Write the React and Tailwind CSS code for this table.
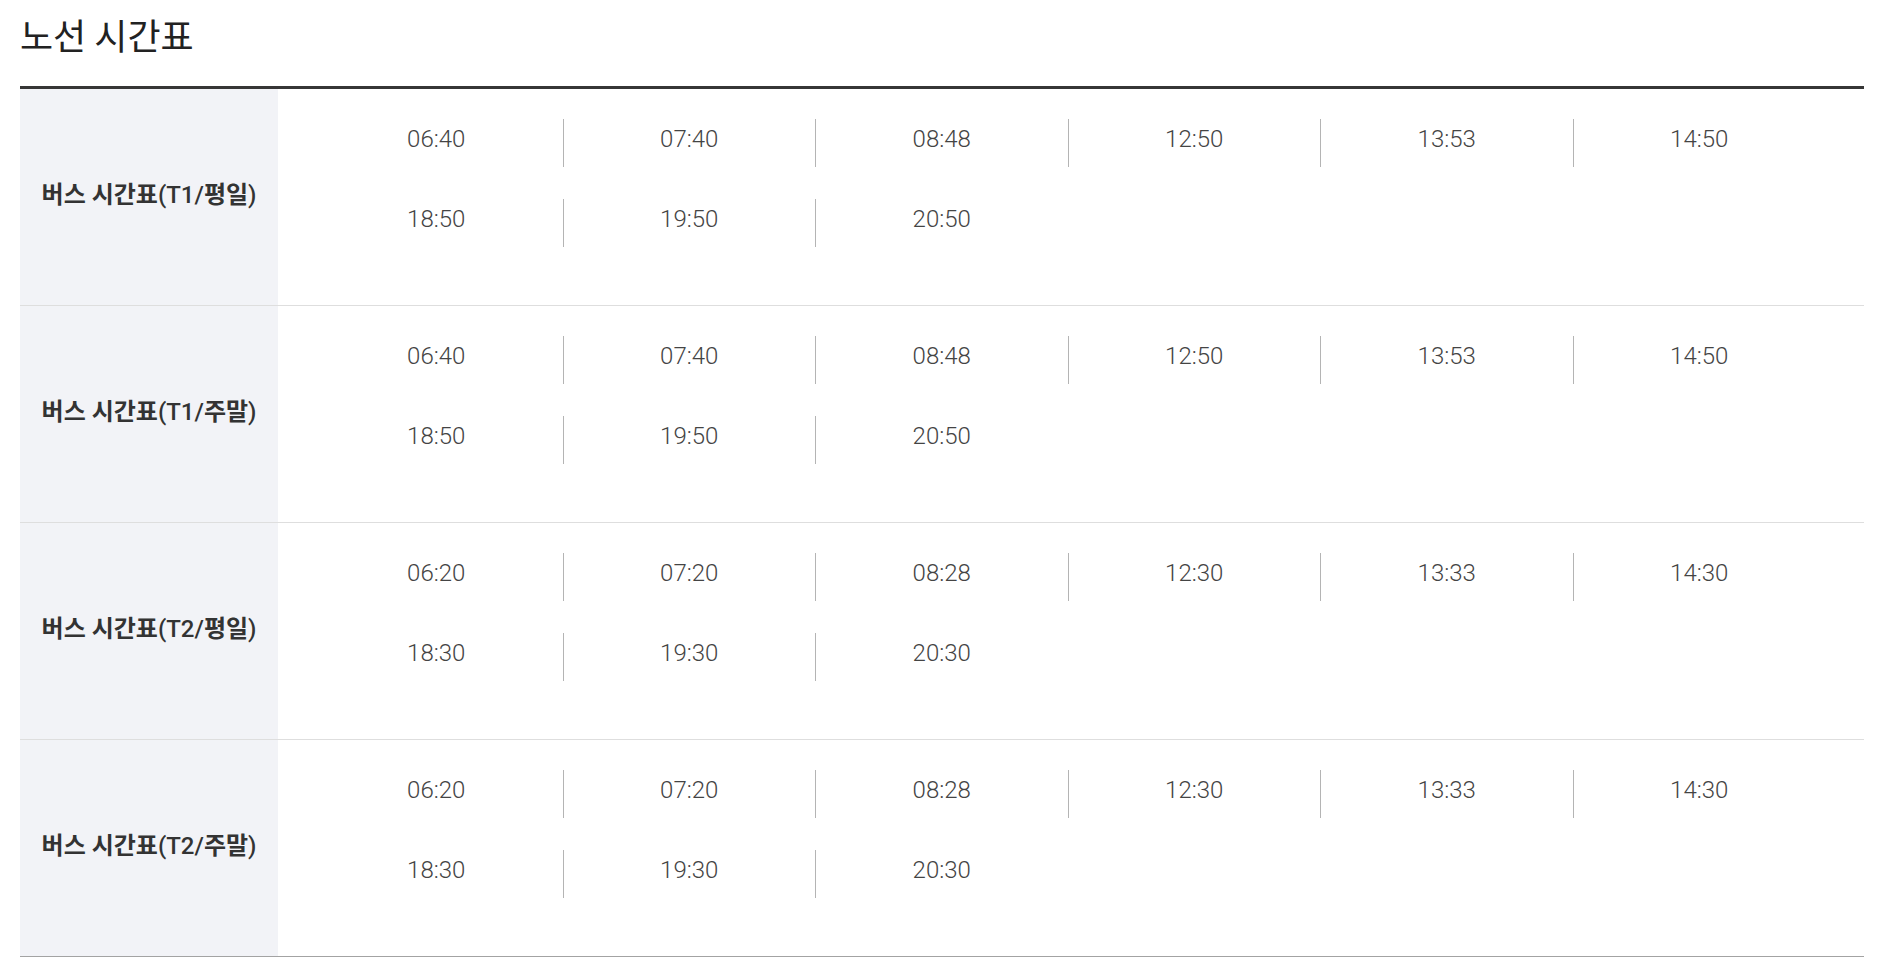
import React from "react";

const rows = [
  { label: ["버스 시간표", "(T1/", "평일", ")"], times: ["06:40", "07:40", "08:48", "12:50", "13:53", "14:50", "18:50", "19:50", "20:50"] },
  { label: ["버스 시간표", "(T1/", "주말", ")"], times: ["06:40", "07:40", "08:48", "12:50", "13:53", "14:50", "18:50", "19:50", "20:50"] },
  { label: ["버스 시간표", "(T2/", "평일", ")"], times: ["06:20", "07:20", "08:28", "12:30", "13:33", "14:30", "18:30", "19:30", "20:30"] },
  { label: ["버스 시간표", "(T2/", "주말", ")"], times: ["06:20", "07:20", "08:28", "12:30", "13:33", "14:30", "18:30", "19:30", "20:30"] },
];

export default function App() {
  return (
    <div className="min-h-[972px] bg-white px-[20px] font-['Roboto','Noto_Sans_CJK_KR',sans-serif]">
      <h1 className="pt-[16px] text-[36px] leading-[36px] font-normal text-[#222] font-['Noto_Sans_CJK_KR',sans-serif]">
        노선 시간표
      </h1>
      <div className="mt-[34px] border-t-[3px] border-[#363636]">
        {rows.map((row, i) => (
          <div
            key={i}
            className={`flex border-b ${i === rows.length - 1 ? "border-[#a3a3a3]" : "border-[#dedede]"}`}
          >
            <div className="w-[258px] shrink-0 bg-[#f2f3f7] flex items-center justify-center pb-[4px]">
              <span className="text-[24px] text-[#333] whitespace-nowrap">
                <span className="font-bold">{row.label[0]}</span>
                <span className="font-medium">{row.label[1]}</span>
                <span className="font-bold">{row.label[2]}</span>
                <span className="font-medium">{row.label[3]}</span>
              </span>
            </div>
            <div className="flex-1 pl-[32px] pr-[39px] pt-[30px] pb-[58px] grid grid-cols-6 gap-y-[32px]">
              {row.times.map((t, j) => (
                <div
                  key={j}
                  className={`h-[48px] text-center text-[24px] leading-[40px] font-light text-[#444] ${j % 6 === 0 ? "" : "border-l border-[#b4b4b4]"}`}
                >
                  {t}
                </div>
              ))}
            </div>
          </div>
        ))}
      </div>
    </div>
  );
}
